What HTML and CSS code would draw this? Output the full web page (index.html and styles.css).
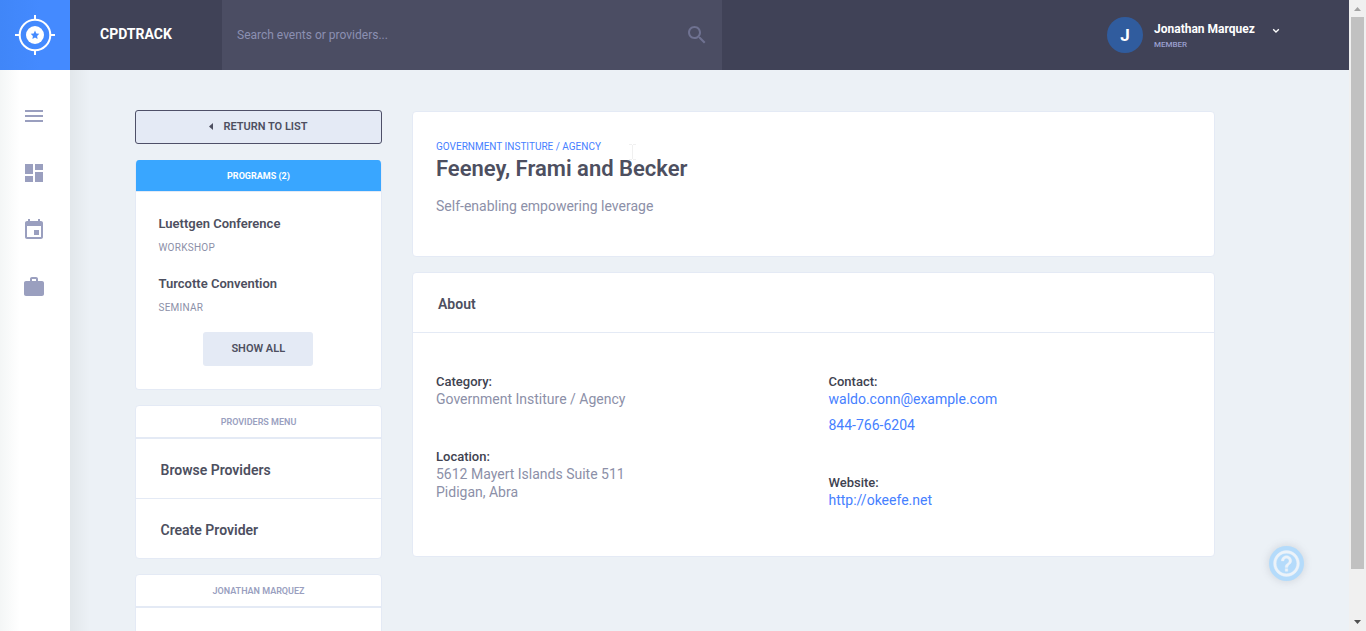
FILE: index.html
```html
<!DOCTYPE html>
<html lang="en">
<head>
<meta charset="utf-8">
<title>CPDTRACK</title>
<link rel="stylesheet" href="styles.css">
</head>
<body>
<div class="window">
  <div class="page">
    <header class="topbar">
      <a class="logo">
        <svg width="40" height="40" viewBox="0 0 40 40" fill="none" stroke="#fff" stroke-width="2">
          <circle cx="20" cy="20" r="15.3"/>
          <path d="M20 0v5M20 35v5M0 20h5M35 20h5"/>
          <circle cx="20" cy="20" r="9" fill="#fff" stroke="none"/>
          <path d="M20 15.6l1.3 2.8 3 .4-2.2 2.1.5 3.1-2.6-1.5-2.6 1.5.5-3.1-2.2-2.1 3-.4z" fill="#448aff" stroke="none"/>
        </svg>
      </a>
      <div class="brand">CPDTRACK</div>
      <div class="search">
        <span>Search events or providers...</span>
        <svg width="24" height="24" viewBox="0 0 24 24" fill="#6f7291"><path d="M15.5 14h-.79l-.28-.27C15.41 12.59 16 11.11 16 9.5 16 5.91 13.09 3 9.5 3S3 5.91 3 9.5 5.91 16 9.5 16c1.61 0 3.09-.59 4.23-1.57l.27.28v.79l5 4.99L20.49 19l-4.99-5zm-6 0C7.01 14 5 11.99 5 9.5S7.01 5 9.5 5 14 7.01 14 9.5 11.99 14 9.5 14z"/></svg>
      </div>
      <div class="user">
        <div class="avatar">J</div>
        <div class="user-text">
          <div class="user-name">Jonathan Marquez</div>
          <div class="user-role">MEMBER</div>
        </div>
        <svg class="chevron" width="8" height="6" viewBox="0 0 8 6" fill="none" stroke="#fff" stroke-width="1.3"><path d="M1.2 1.2L4 4l2.8-2.8"/></svg>
      </div>
    </header>
    <div class="body">
      <nav class="rail">
        <svg width="24" height="24" viewBox="0 0 24 24"><path d="M3 18h18v-2H3v2zm0-5h18v-2H3v2zm0-7v2h18V6H3z"/></svg>
        <svg width="24" height="24" viewBox="0 0 24 24"><path d="M3 13h8V3H3v10zm0 8h8v-6H3v6zm10 0h8V11h-8v10zm0-18v6h8V3h-8z"/></svg>
        <svg width="24" height="24" viewBox="0 0 24 24"><path d="M17 12h-5v5h5v-5zM16 1v2H8V1H6v2H5c-1.11 0-1.99.9-1.99 2L3 19c0 1.1.89 2 2 2h14c1.1 0 2-.9 2-2V5c0-1.1-.9-2-2-2h-1V1h-2zm3 18H5V8h14v11z"/></svg>
        <svg width="24" height="24" viewBox="0 0 24 24"><path d="M20 6h-4V4c0-1.11-.89-2-2-2h-4c-1.11 0-2 .89-2 2v2H4c-1.11 0-2 .89-2 2v11c0 1.11.89 2 2 2h16c1.11 0 2-.89 2-2V8c0-1.11-.89-2-2-2zm-6 0h-4V4h4v2z"/></svg>
      </nav>
      <main class="content">
        <aside class="side">
          <a class="btn-return"><svg width="4" height="7" viewBox="0 0 4 7" fill="#4d4f60"><path d="M4 0v7L0 3.5z"/></svg><span>RETURN TO LIST</span></a>
          <section class="card programs">
            <h3 class="card-head card-head-blue">PROGRAMS (2)</h3>
            <div class="programs-body">
              <div class="program-name">Luettgen Conference</div>
              <div class="program-kind">WORKSHOP</div>
              <div class="program-name">Turcotte Convention</div>
              <div class="program-kind">SEMINAR</div>
              <a class="btn-all">SHOW ALL</a>
            </div>
          </section>
          <section class="card">
            <h3 class="card-head">PROVIDERS MENU</h3>
            <a class="menu-item">Browse Providers</a>
            <a class="menu-item">Create Provider</a>
          </section>
          <section class="card">
            <h3 class="card-head">JONATHAN MARQUEZ</h3>
            <a class="menu-item"></a>
          </section>
        </aside>
        <div class="main">
          <section class="card hero">
            <div class="hero-kind">GOVERNMENT INSTITURE / AGENCY</div>
            <h1 class="hero-title">Feeney, Frami and Becker</h1>
            <div class="hero-sub">Self-enabling empowering leverage</div>
          </section>
          <section class="card about">
            <h2 class="about-head">About</h2>
            <div class="about-body">
              <div class="about-col">
                <div class="field">
                  <div class="label">Category:</div>
                  <div class="value">Government Institure / Agency</div>
                </div>
                <div class="field">
                  <div class="label">Location:</div>
                  <div class="value">5612 Mayert Islands Suite 511<br>Pidigan, Abra</div>
                </div>
              </div>
              <div class="about-col">
                <div class="field">
                  <div class="label">Contact:</div>
                  <a class="value link">waldo.conn@example.com</a>
                  <a class="value link link-phone">844-766-6204</a>
                </div>
                <div class="field">
                  <div class="label">Website:</div>
                  <a class="value link">http://okeefe.net</a>
                </div>
              </div>
            </div>
          </section>
        </div>
      </main>
    </div>
    <svg class="pointer" width="7" height="16" viewBox="0 0 7 16" fill="none" stroke="#f0f0f0"><path d="M0 .5h3M4 .5h3M3.5 1v14M0 15.5h3M4 15.5h3"/></svg>
    <div class="help">
      <svg width="31" height="31" viewBox="0 0 24 24" fill="#ecf3f9" stroke="#ecf3f9" stroke-width=".3"><path d="M11 18h2v-2h-2v2zm1-16C6.480 2 2 6.480 2 12s4.480 10 10 10 10-4.480 10-10S17.520 2 12 2zm0 18c-4.410 0-8-3.590-8-8s3.590-8 8-8 8 3.590 8 8-3.590 8-8 8zm0-14c-2.210 0-4 1.790-4 4h2c0-1.100.9-2 2-2s2 .9 2 2c0 2-3 1.750-3 5h2c0-2.250 3-2.500 3-5 0-2.210-1.790-4-4-4z"/></svg>
    </div>
  </div>
  <div class="scrollbar">
    <svg width="7" height="4" viewBox="0 0 7 4" fill="#a3a3a3"><path d="M3.500 0L7 4H0z"/></svg>
    <div class="thumb"></div>
    <svg class="arrow-down" width="7" height="4" viewBox="0 0 7 4" fill="#505050"><path d="M3.500 4L7 0H0z"/></svg>
  </div>
</div>
</body>
</html>
```
FILE: styles.css
```css
* { box-sizing: border-box; }
body {
  margin: 0;
  overflow: hidden;
  font-family: Roboto, "Liberation Sans", sans-serif;
  font-size: 13px;
  color: #4d4f60;
  background: #ecf1f6;
}
h1, h2, h3 { margin: 0; }
svg { display: block; flex: none; }
.window { display: flex; height: 631px; overflow: hidden; }
.page { position: relative; flex: 1; display: flex; flex-direction: column; min-width: 0; overflow: hidden; }

.topbar { display: flex; flex: none; height: 70px; background: #404257; }
.logo { width: 70px; display: flex; align-items: center; justify-content: center; background: linear-gradient(90deg, #4086f8, #448aff 40px); }
.brand { width: 152px; padding-left: 30px; line-height: 68px; font-size: 14px; font-weight: 700; color: #fff; }
.search { width: 500px; display: flex; align-items: center; justify-content: space-between; padding: 0 13px 0 15px; background: #4b4d63; color: #8c90b2; font-size: 12px; }
.user { flex: 1; display: flex; align-items: center; padding-left: 385px; }
.avatar { width: 36px; height: 36px; border-radius: 50%; background: #305c9e; color: #fff; font-size: 17px; font-weight: 700; line-height: 36px; text-align: center; }
.user-text { padding: 2px 0 0 11px; width: 118px; white-space: nowrap; }
.user-name { color: #fff; font-size: 12px; font-weight: 700; line-height: 16px; }
.user-role { color: #9a9fcf; font-size: 8px; font-weight: 500; line-height: 15px; }
.chevron { margin: -8px 0 0 11px; }

.body { flex: 1; display: flex; min-height: 0; }
.rail { width: 70px; flex: none; display: flex; flex-direction: column; gap: 33px; padding: 34px 0 0 22px; background: linear-gradient(90deg, #f4f6f6, #fff 20px); fill: #9a9fbf; }
.content { flex: 1; display: flex; align-items: flex-start; gap: 30px; padding: 40px 0 0 65px; background: linear-gradient(90deg, #e2e7eb, #ecf1f6 20px); }
.card { border: 1px solid #e4eaf5; border-radius: 4px; background: #fff; overflow: hidden; }

.side { width: 247px; flex: none; display: flex; flex-direction: column; gap: 15px; }
.btn-return { display: flex; align-items: center; justify-content: center; gap: 10px; height: 34px; margin-bottom: 1px; padding-bottom: 2px; border: 1px solid #4e5068; border-radius: 3px; background: #e4eaf5; font-size: 11px; font-weight: 600; }
.card-head { height: 33px; border-bottom: 2px solid #e4eaf5; text-align: center; line-height: 32px; font-size: 9px; font-weight: 600; color: #9a9fbf; }
.programs { height: 230px; border-top: 0; }
.card-head-blue { height: 32px; border-bottom-width: 1px; background: #39a6ff; color: #fff; font-weight: 700; }
.programs-body { display: flex; flex-direction: column; padding: 20px 23px 0 22.500px; }
.program-name { font-size: 13px; font-weight: 600; line-height: 24px; }
.program-kind { margin-bottom: 12px; font-size: 10px; line-height: 24px; letter-spacing: .25px; color: #8c90a8; }
.btn-all { align-self: center; width: 110px; height: 34px; border-radius: 3px; background: #e4eaf5; font-size: 11px; font-weight: 600; line-height: 33px; text-align: center; }
.menu-item { display: block; height: 59px; padding-left: 24.500px; line-height: 62px; font-size: 14px; font-weight: 600; }
.menu-item + .menu-item { height: 60px; border-top: 1px solid #e4eaf5; line-height: 62px; }

.main { width: 803px; flex: none; display: flex; flex-direction: column; gap: 15px; padding-top: 1px; }
.hero { height: 146px; padding: 25px 23px 0; }
.hero-kind { font-size: 10px; line-height: 19px; color: #4680ff; }
.hero-title { font-size: 22px; font-weight: 600; line-height: 25px; }
.hero-sub { padding-top: 15px; font-size: 14px; line-height: 20px; color: #8c90a8; }
.about { height: 285px; }
.about-head { height: 60px; padding-left: 25px; border-bottom: 1px solid #e4eaf5; font-size: 14px; font-weight: 600; line-height: 62px; }
.about-body { display: flex; padding: 40px 0 0 23px; }
.about-col { width: 392.500px; flex: none; display: flex; flex-direction: column; gap: 40px; }
.about-col:last-child { width: 380px; }
.label { font-size: 13px; font-weight: 500; line-height: 18px; color: #404250; }
.value { display: block; margin-top: -1px; font-size: 14px; line-height: 18px; color: #8c90a8; }
.link { color: #4680ff; }
.link-phone { padding-top: 9px; }

.pointer { position: absolute; left: 629px; top: 144px; }
.help { position: absolute; left: 1269px; top: 546px; width: 35px; height: 35px; display: flex; align-items: center; justify-content: center; border-radius: 50%; background: #b4dbfb; box-shadow: 0 0 8px rgba(90, 100, 120, .22); }
.scrollbar { width: 17px; flex: none; display: flex; flex-direction: column; align-items: center; padding: 7px 0; background: #f0f0f0; }
.thumb { width: 13px; height: 552px; margin-top: 6px; background: #c1c1c1; }
.arrow-down { margin-top: auto; }
```
